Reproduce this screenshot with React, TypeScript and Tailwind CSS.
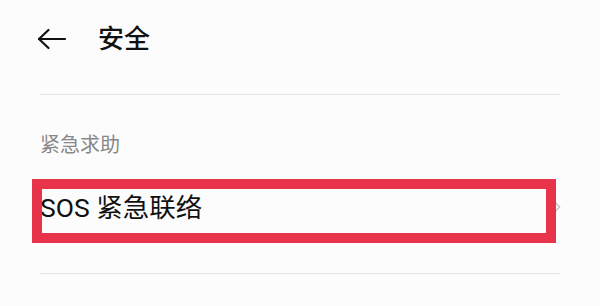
import React from "react";

export default function App() {
  return (
    <div
      className="w-[600px] h-[306px] bg-[#fcfcfc] overflow-hidden text-black"
      style={{ fontFamily: 'Roboto, "Noto Sans CJK SC", sans-serif' }}
    >
      <div className="px-[40px]">
        <div className="h-[95px] border-b border-[#e4e4e4]">
          <div className="h-[78px] flex items-center -ml-[3px]">
            <svg width="30" height="22" viewBox="0 0 30 22" fill="none" stroke="#111" strokeWidth="2.2" strokeLinecap="round" strokeLinejoin="round">
              <path d="M2 11H28" />
              <path d="M11.5 2L2 11L11.5 20" />
            </svg>
            <span className="ml-[31px] text-[26px] leading-[34px] font-medium text-[#111]">安全</span>
          </div>
        </div>
        <div className="pt-[36px] leading-[28px] text-[20px] text-[#888]">紧急求助</div>
        <div className="relative pt-[34px] pb-[50px] border-b border-[#e4e4e4]">
          <div className="flex items-center justify-between h-[30px]">
            <span className="text-[26.5px] leading-[30px] text-[#111]">SOS 紧急联络</span>
            <svg width="8" height="14" viewBox="0 0 8 14" fill="none" stroke="#c8c8c8" strokeWidth="1.6" className="mr-[-1px] mt-[-2px]">
              <path d="M1.5 1.5L6.5 7L1.5 12.5" />
            </svg>
          </div>
          <div className="absolute left-[-8px] top-[20px] w-[524px] h-[64px] border-[10px] border-[#e8344a]" />
        </div>
      </div>
    </div>
  );
}
